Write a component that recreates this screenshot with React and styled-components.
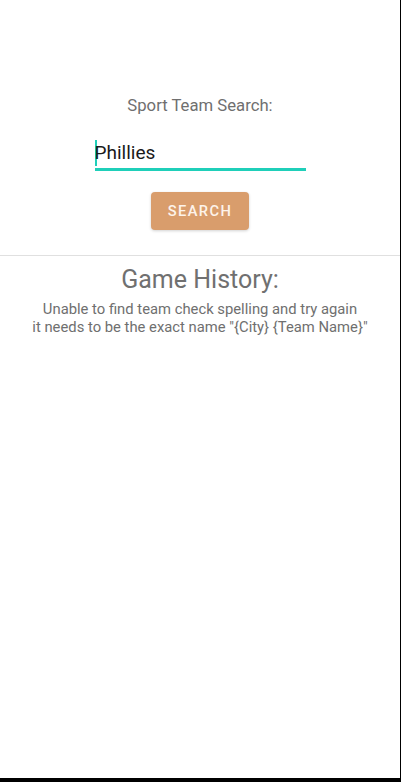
import styled, { createGlobalStyle } from "styled-components";

const GlobalStyle = createGlobalStyle`
  html, body {
    margin: 0;
    padding: 0;
    background: #000;
  }
  body {
    font-family: Roboto, "Liberation Sans", sans-serif;
  }
`;

const Screen = styled.div`
  width: 400px;
  height: 778px;
  background: #fff;
  display: flex;
  flex-direction: column;
`;

const SearchSection = styled.div`
  display: flex;
  flex-direction: column;
  align-items: center;
  padding-top: 96px;
  padding-bottom: 25px;
  border-bottom: 1px solid #e0e0e0;
`;

const Label = styled.div`
  font-size: 16.7px;
  color: #6f6f6f;
  line-height: 20px;
`;

const Field = styled.div`
  width: 211px;
  margin-top: 24px;
  border-bottom: 3px solid #1fcfb9;
  display: flex;
  align-items: center;
  padding-bottom: 2px;
`;

const Caret = styled.span`
  width: 2px;
  height: 26px;
  margin-right: -2px;
  background: #1fcfb9;
`;

const Value = styled.span`
  font-size: 19px;
  color: #1a1a1a;
  line-height: 26px;
`;

const SearchButton = styled.button`
  margin-top: 21px;
  width: 98px;
  height: 38px;
  border: none;
  border-radius: 4px;
  background: #d99d6c;
  color: #fdf3ea;
  font-family: Roboto, "Liberation Sans", sans-serif;
  font-size: 14.7px;
  font-weight: 500;
  letter-spacing: 1.4px;
  box-shadow: 0 1px 3px rgba(0, 0, 0, 0.18);
`;

const HistorySection = styled.div`
  display: flex;
  flex-direction: column;
  align-items: center;
  padding-top: 10px;
`;

const Heading = styled.div`
  font-size: 25px;
  color: #707070;
  line-height: 28px;
`;

const Message = styled.div`
  margin-top: 6px;
  font-size: 14.8px;
  line-height: 18px;
  color: #6f6f6f;
  text-align: center;
`;

export default function App() {
  return (
    <>
      <GlobalStyle />
      <Screen>
        <SearchSection>
          <Label>Sport Team Search:</Label>
          <Field>
            <Caret />
            <Value>Phillies</Value>
          </Field>
          <SearchButton>SEARCH</SearchButton>
        </SearchSection>
        <HistorySection>
          <Heading>Game History:</Heading>
          <Message>
            Unable to find team check spelling and try again
            <br />
            it needs to be the exact name "{"{City}"} {"{Team Name}"}"
          </Message>
        </HistorySection>
      </Screen>
    </>
  );
}
